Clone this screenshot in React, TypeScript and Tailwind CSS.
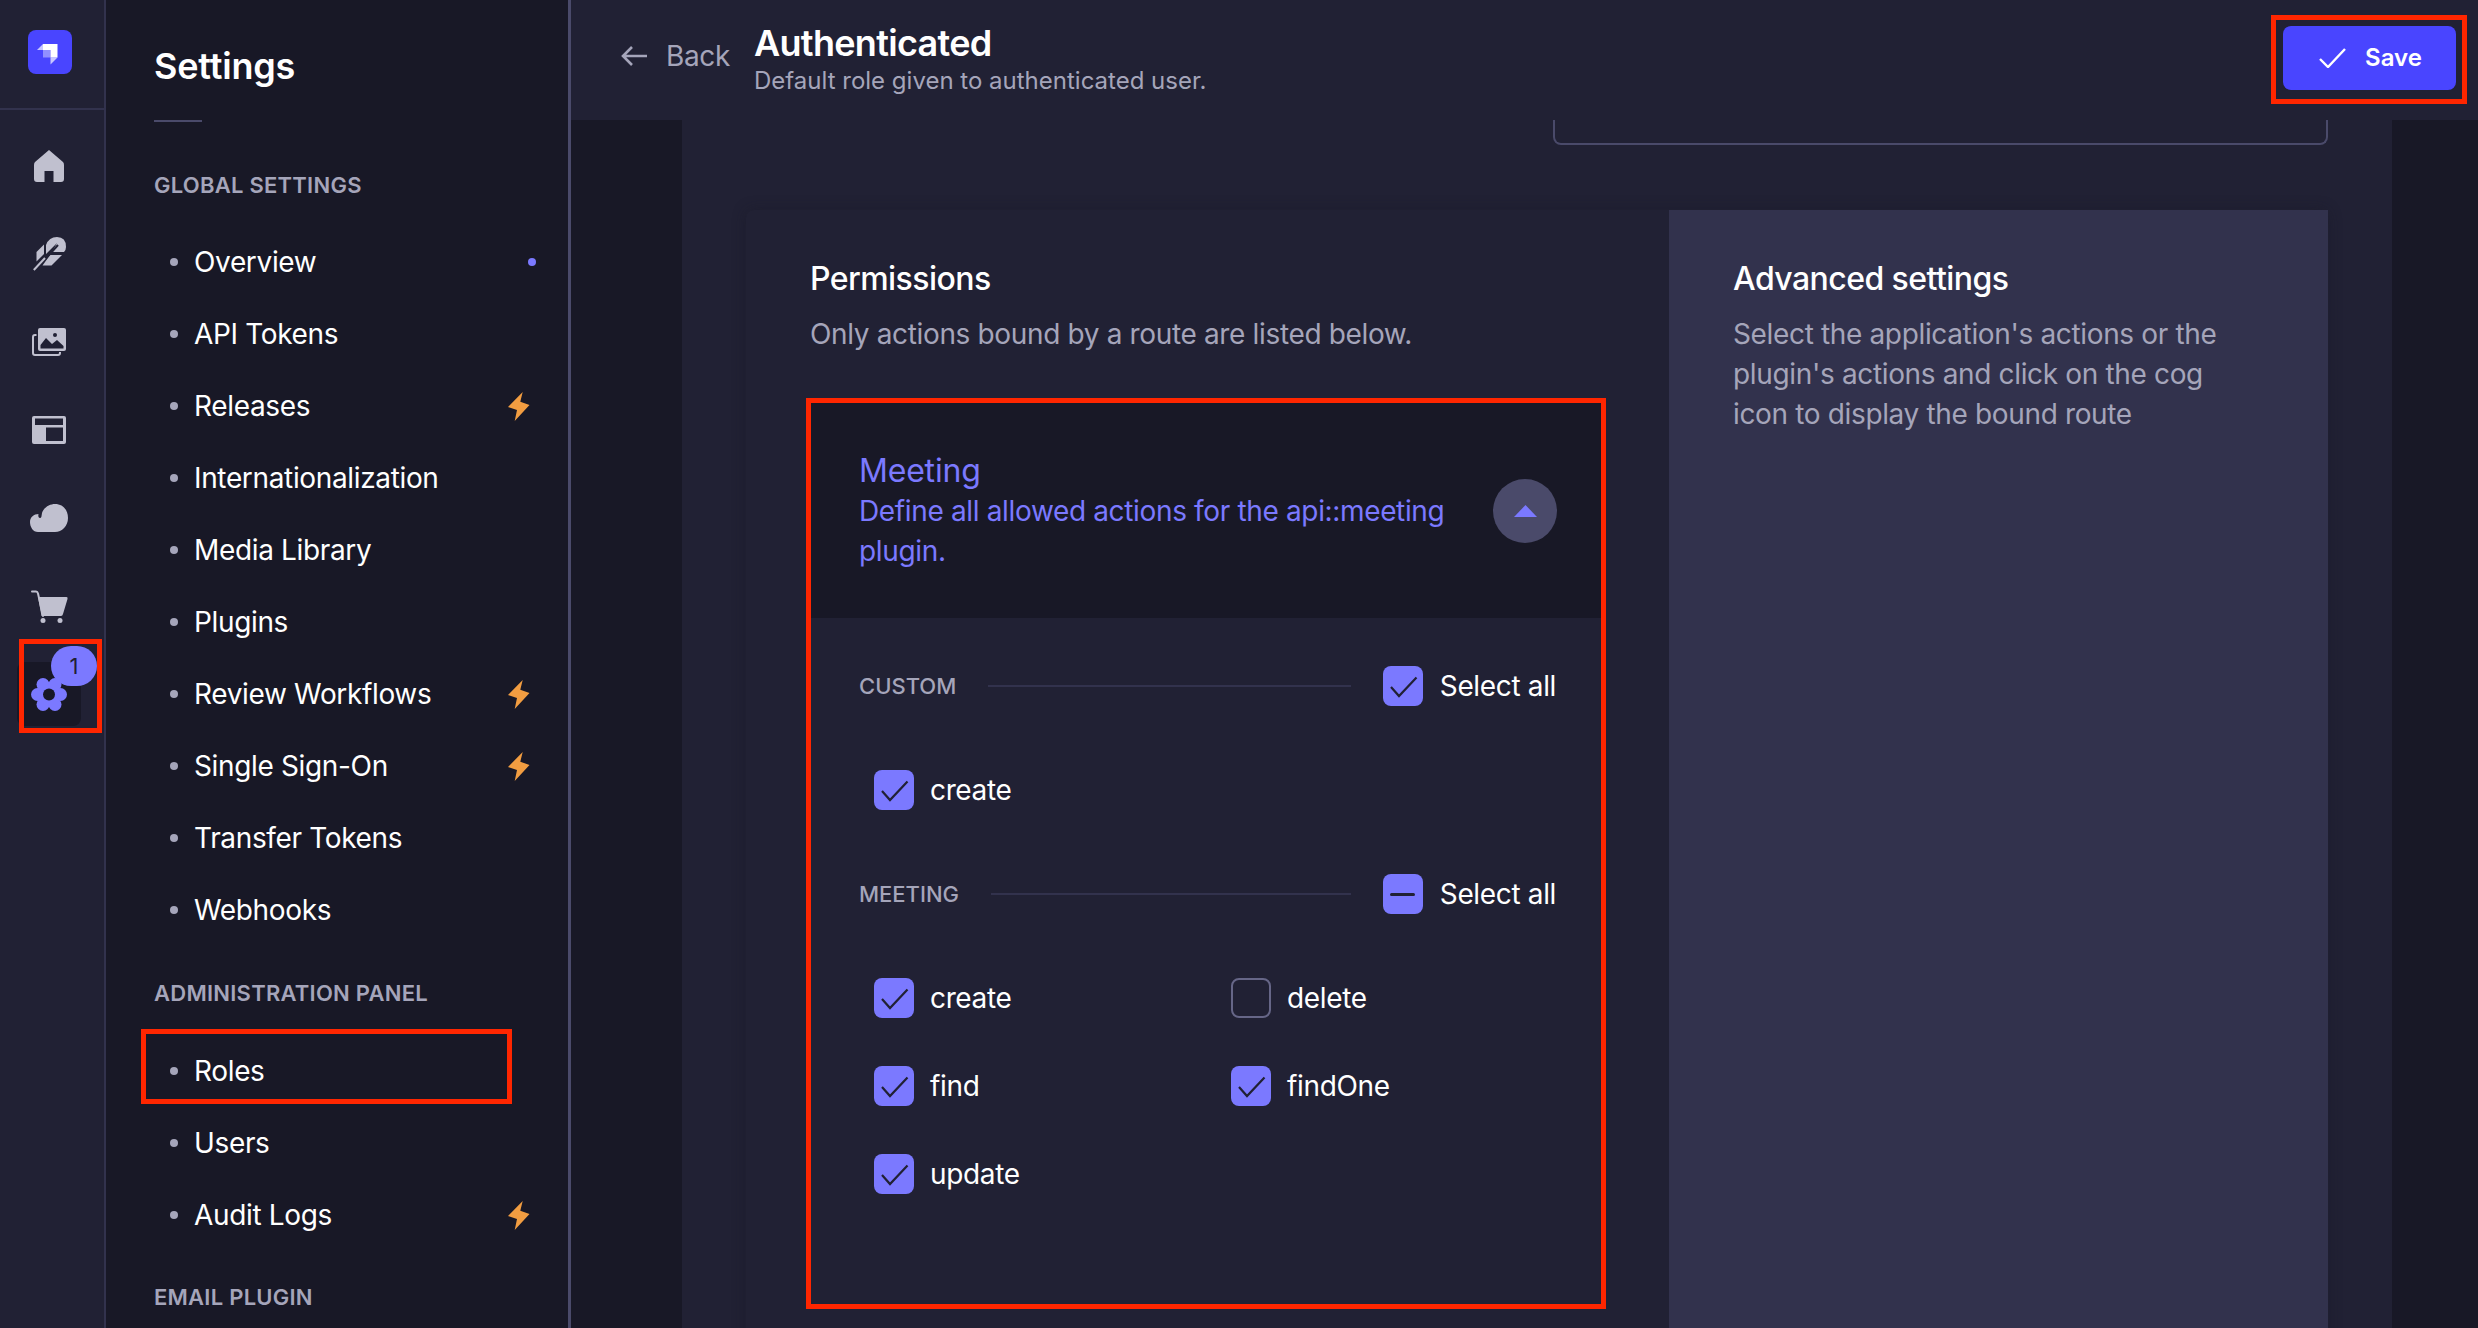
import React from "react";

const globalItems: { label: string; badge?: "dot" | "bolt" }[] = [
  { label: "Overview", badge: "dot" },
  { label: "API Tokens" },
  { label: "Releases", badge: "bolt" },
  { label: "Internationalization" },
  { label: "Media Library" },
  { label: "Plugins" },
  { label: "Review Workflows", badge: "bolt" },
  { label: "Single Sign-On", badge: "bolt" },
  { label: "Transfer Tokens" },
  { label: "Webhooks" },
];

const sectionLabel = "text-[22px] leading-[32px] font-semibold tracking-[0.25px] text-[#a5a5ba] uppercase";
const body = "text-[28px] leading-[40px] tracking-[-0.35px]";
const heading = "text-[32px] leading-[40px] font-medium tracking-[-0.56px] text-white";

function Bolt() {
  return (
    <svg width="22" height="29" viewBox="0 0 22 29" className="mr-[6px]">
      <path d="M14.7 0 L0 15 L9 18 L6.7 29 L21.5 13 L12.3 9.7 Z" fill="#f29d41" />
    </svg>
  );
}

function NavRow({ label, badge, boxed }: { label: string; badge?: "dot" | "bolt"; boxed?: boolean }) {
  return (
    <div className="relative flex h-[72px] items-center pl-[16px] pr-[2px]">
      <span className="h-[8px] w-[8px] rounded-full bg-[#a5a5ba]" />
      <span className={`ml-[16px] text-white ${body}`}>{label}</span>
      <span className="ml-auto flex items-center">
        {badge === "dot" && <span className="h-[8px] w-[8px] rounded-full bg-[#7b79ff]" />}
        {badge === "bolt" && <Bolt />}
      </span>
      {boxed && <span className="pointer-events-none absolute left-[-13px] top-[-6.5px] h-[75px] w-[371px] border-[5px] border-[#ff2600]" />}
    </div>
  );
}

function Home() {
  return (
    <svg width="30" height="32" viewBox="0 0 30 32" fill="#c0c0cf">
      <path d="M15 0 L29 12 Q30 13 30 15 V29 Q30 32 27 32 H19.5 V21 H10.5 V32 H3 Q0 32 0 29 V15 Q0 13 1 12 Z" />
    </svg>
  );
}

function Feather() {
  return (
    <svg width="33" height="34" viewBox="0 0 33 34" fill="#c0c0cf">
      <path d="M3.5 15 L11 7.5 V17 L3.5 24.5 Z" />
      <path d="M13 17 V8 Q16 0 24 0 Q33 0 33 10 Q33 13 31 15 H19 L24 6 Z" />
      <path d="M17 18 H29 L18.5 28.5 H9.5 Z" />
      <path d="M0.8 33 L24 7" stroke="#212134" strokeWidth="2" transform="translate(1 1)" fill="none" />
      <path d="M0.8 33 L12 21" stroke="#c0c0cf" strokeWidth="2" fill="none" />
    </svg>
  );
}

function Media() {
  return (
    <svg width="34" height="28" viewBox="0 0 34 28">
      <rect x="1" y="7" width="27" height="20" rx="2" fill="none" stroke="#c0c0cf" strokeWidth="2" />
      <rect x="4.5" y="-1" width="30" height="25" fill="#212134" />
      <rect x="6" y="0" width="28" height="23" rx="2" fill="#c0c0cf" />
      <circle cx="23" cy="7" r="2" fill="#212134" />
      <path d="M8.5 20.5 V17 L14 10 L20 16 L25 12 L31.5 18 V20.5 Z" fill="#212134" />
    </svg>
  );
}

function LayoutIcon() {
  return (
    <svg width="34" height="28" viewBox="0 0 34 28">
      <rect width="34" height="28" rx="2" fill="#c0c0cf" />
      <rect x="3" y="2.5" width="28" height="6.5" fill="#212134" />
      <rect x="14" y="11.5" width="17" height="13.5" fill="#212134" />
    </svg>
  );
}

function Cloud() {
  return (
    <svg width="38" height="28" viewBox="0 0 38 28" fill="#c0c0cf">
      <path d="M8 28 C3 28 0 23 0 18 C0 13 4 10 8.5 10 C8 12 8.5 14 10 14 C11.5 14 11.5 12 12 9 C14 3 20 0 25 0 C33 0 38 6 38 14 C38 22 32 28 25 28 Z" />
    </svg>
  );
}

function Cart() {
  return (
    <svg width="37" height="33" viewBox="0 0 37 33" fill="#c0c0cf">
      <path d="M1 1.5 H5 Q6.5 1.5 7 3.5 L12 26" fill="none" stroke="#c0c0cf" strokeWidth="2" strokeLinecap="round" />
      <path d="M7 7 H35.5 Q37 7 36.5 9 L32 24 Q31.5 26 30 26 H10.5 Z" />
      <circle cx="12" cy="30.5" r="2.5" />
      <circle cx="29" cy="30.5" r="2.5" />
    </svg>
  );
}

function Gear() {
  return (
    <svg width="36" height="33" viewBox="0 0 36 33" fill="#7b79ff">
      <circle cx="18" cy="16.5" r="11.5" />
      <circle cx="6.5" cy="16.5" r="6.5" />
      <circle cx="29.5" cy="16.5" r="6.5" />
      <circle cx="12" cy="6.5" r="6.5" />
      <circle cx="24" cy="6.5" r="6.5" />
      <circle cx="12" cy="26.5" r="6.5" />
      <circle cx="24" cy="26.5" r="6.5" />
      <circle cx="18" cy="16.5" r="6" fill="#181826" />
    </svg>
  );
}

function Check() {
  return (
    <svg width="40" height="40" viewBox="0 0 40 40">
      <path d="M8 21 L16 30 L33.5 11.5" fill="none" stroke="#212134" strokeWidth="2.2" />
    </svg>
  );
}

function Box({ state }: { state: "on" | "off" | "mixed" }) {
  if (state === "off") {
    return <span className="h-[40px] w-[40px] shrink-0 rounded-[8px] border-2 border-[#666687]" />;
  }
  return (
    <span className="flex h-[40px] w-[40px] shrink-0 items-center justify-center rounded-[8px] bg-[#7b79ff]">
      {state === "on" ? <Check /> : <span className="h-[3px] w-[25px] rounded-full bg-[#212134]" />}
    </span>
  );
}

function Perm({ label, state = "on" }: { label: string; state?: "on" | "off" }) {
  return (
    <div className="flex h-[40px] items-center gap-[16px]">
      <Box state={state} />
      <span className={`text-white ${body}`}>{label}</span>
    </div>
  );
}

function GroupHead({ label, state }: { label: string; state: "on" | "mixed" }) {
  return (
    <div className="flex h-[40px] items-center pl-[48px] pr-[45px]">
      <span className="text-[22px] font-medium text-[#a5a5ba] uppercase">{label}</span>
      <span className="mx-[32px] h-[2px] flex-1 bg-[#32324d]" />
      <Box state={state} />
      <span className={`ml-[17px] text-white ${body}`}>Select all</span>
    </div>
  );
}

export default function App() {
  return (
    <div className="flex h-[1328px] w-full overflow-hidden bg-[#181826] font-['Inter',sans-serif]">
      {/* main nav */}
      <aside className="w-[106px] shrink-0 border-r-2 border-[#32324d] bg-[#212134]">
        <div className="flex h-[110px] items-start border-b-2 border-[#32324d] pl-[28px] pt-[30px]">
          <svg width="44" height="44" viewBox="0 0 44 44">
            <rect width="44" height="44" rx="8" fill="#4945ff" />
            <path d="M15 14 H29.5 V27.5 H22.5 V20 H15 Z" fill="#fff" />
            <path d="M9 20 L15 14 V20 Z" fill="#fff" opacity="0.7" />
            <path d="M22.5 27.5 H29.5 L22.5 34.5 Z" fill="#fff" opacity="0.7" />
            <path d="M15 20 H22.5 V27.5 H15 Z" fill="#fff" opacity="0.4" />
          </svg>
        </div>
        <nav className="flex flex-col gap-[24px] pl-[17px] pt-[24px]">
          {[<Home />, <Feather />, <Media />, <LayoutIcon />, <Cloud />, <Cart />].map((icon, i) => (
            <div key={i} className="flex h-[64px] w-[64px] items-center justify-center">
              {icon}
            </div>
          ))}
          <div className="relative flex h-[64px] w-[64px] items-center justify-center rounded-[8px] bg-[#181826]">
            <Gear />
            <span className="absolute left-[34px] top-[-16px] flex h-[40px] w-[46px] items-center justify-center rounded-full bg-[#7b79ff] text-[22px] text-[#212134]">
              1
            </span>
            <span className="pointer-events-none absolute left-[2px] top-[-23px] h-[94px] w-[83px] border-[5px] border-[#ff2600]" />
          </div>
        </nav>
      </aside>

      {/* settings sub nav */}
      <aside className="w-[465px] shrink-0 border-r-[3px] border-[#4a4a6a] bg-[#181826] pl-[48px] pr-[30px] pt-[42px]">
        <h2 className="text-[36px] leading-[48px] font-semibold tracking-[-0.2px] text-white">Settings</h2>
        <div className="mt-[30px] h-[2px] w-[48px] bg-[#4a4a6a]" />
        <h3 className={`mt-[47px] ${sectionLabel}`}>Global Settings</h3>
        <div className="mt-[25px]">
          {globalItems.map((item) => (
            <NavRow key={item.label} label={item.label} badge={item.badge} />
          ))}
        </div>
        <h3 className={`mt-[31px] ${sectionLabel}`}>Administration Panel</h3>
        <div className="mt-[26px]">
          <NavRow label="Roles" boxed />
          <NavRow label="Users" />
          <NavRow label="Audit Logs" badge="bolt" />
        </div>
        <h3 className={`mt-[30px] ${sectionLabel}`}>Email Plugin</h3>
      </aside>

      <div className="min-w-0 flex-1">
        {/* header */}
        <header className="flex h-[120px] items-start bg-[#212134] pl-[50px] pr-[22px] pt-[21px]">
          <div className="mt-[15px] flex items-center gap-[19px] text-[#a5a5ba]">
            <svg width="26" height="20" viewBox="0 0 26 20" fill="none" stroke="#a5a5ba" strokeWidth="2.6">
              <path d="M26 10 H2 M11 1 L2 10 L11 19" />
            </svg>
            <span className={body}>Back</span>
          </div>
          <div className="ml-[24px]">
            <h1 className="text-[36px] leading-[44px] font-semibold tracking-[-0.7px] text-white">Authenticated</h1>
            <p className="text-[24px] leading-[32px] text-[#a5a5ba]">Default role given to authenticated user.</p>
          </div>
          <button className="relative ml-auto mt-[5px] flex h-[64px] w-[173px] items-center justify-center gap-[19px] rounded-[8px] bg-[#4945ff] pl-[2px] text-[24px] font-semibold text-white">
            <svg width="27" height="20" viewBox="0 0 27 20" fill="none" stroke="#fff" strokeWidth="2.4">
              <path d="M1 11 L9 19 L26 1" />
            </svg>
            Save
            <span className="pointer-events-none absolute left-[-12px] top-[-11px] h-[89px] w-[196px] border-[5px] border-[#ff2600]" />
          </button>
        </header>

        {/* scrolled content */}
        <main className="ml-[111px] h-[1208px] w-[1710px] bg-[#212134] px-[64px]">
          <div className="flex justify-end">
            <div className="h-[25px] w-[775px] rounded-b-[8px] border-x-2 border-b-2 border-[#4a4a6a] bg-[#212134]" />
          </div>
          <section className="mt-[65px] flex h-[1200px] rounded-t-[8px] shadow-[0_0_14px_rgba(24,24,38,0.45)]">
            <div className="flex-1 pl-[64px] pr-[68px] pt-[49px]">
              <h2 className={heading}>Permissions</h2>
              <p className={`mt-[15px] text-[#a5a5ba] ${body}`}>Only actions bound by a route are listed below.</p>

              <div className="relative ml-[1px] mt-[49px] h-[901px]">
                <div className="flex h-[215px] items-center bg-[#181826] pl-[48px] pr-[44px]">
                  <div className="w-[600px] pt-[1px]">
                    <h3 className="text-[32px] leading-[40px] tracking-[-0.2px] text-[#7b79ff]">Meeting</h3>
                    <p className={`text-[#7b79ff] ${body}`}>Define all allowed actions for the api::meeting plugin.</p>
                  </div>
                  <span className="ml-auto flex h-[64px] w-[64px] items-center justify-center rounded-full bg-[#4a4a6a]">
                    <svg width="23" height="12" viewBox="0 0 23 12">
                      <path d="M11.5 0 L23 12 H0 Z" fill="#7b79ff" />
                    </svg>
                  </span>
                </div>

                <div className="pt-[48px]">
                  <GroupHead label="Custom" state="on" />
                  <div className="mt-[64px] pl-[63px]">
                    <Perm label="create" />
                  </div>
                  <div className="mt-[64px]">
                    <GroupHead label="Meeting" state="mixed" />
                  </div>
                  <div className="mt-[64px] grid grid-cols-[357px_1fr] gap-y-[48px] pl-[63px]">
                    <Perm label="create" />
                    <Perm label="delete" state="off" />
                    <Perm label="find" />
                    <Perm label="findOne" />
                    <Perm label="update" />
                  </div>
                </div>
                <span className="pointer-events-none absolute inset-[-5px] border-[5px] border-[#ff2600]" />
              </div>
            </div>

            <div className="w-[659px] bg-[#32324d] pl-[64px] pr-[80px] pt-[49px]">
              <h2 className={heading}>Advanced settings</h2>
              <p className={`mt-[15px] text-[#a5a5ba] ${body}`}>
                Select the application's actions or the plugin's actions and click on the cog icon to display the bound route
              </p>
            </div>
          </section>
        </main>
      </div>
    </div>
  );
}
